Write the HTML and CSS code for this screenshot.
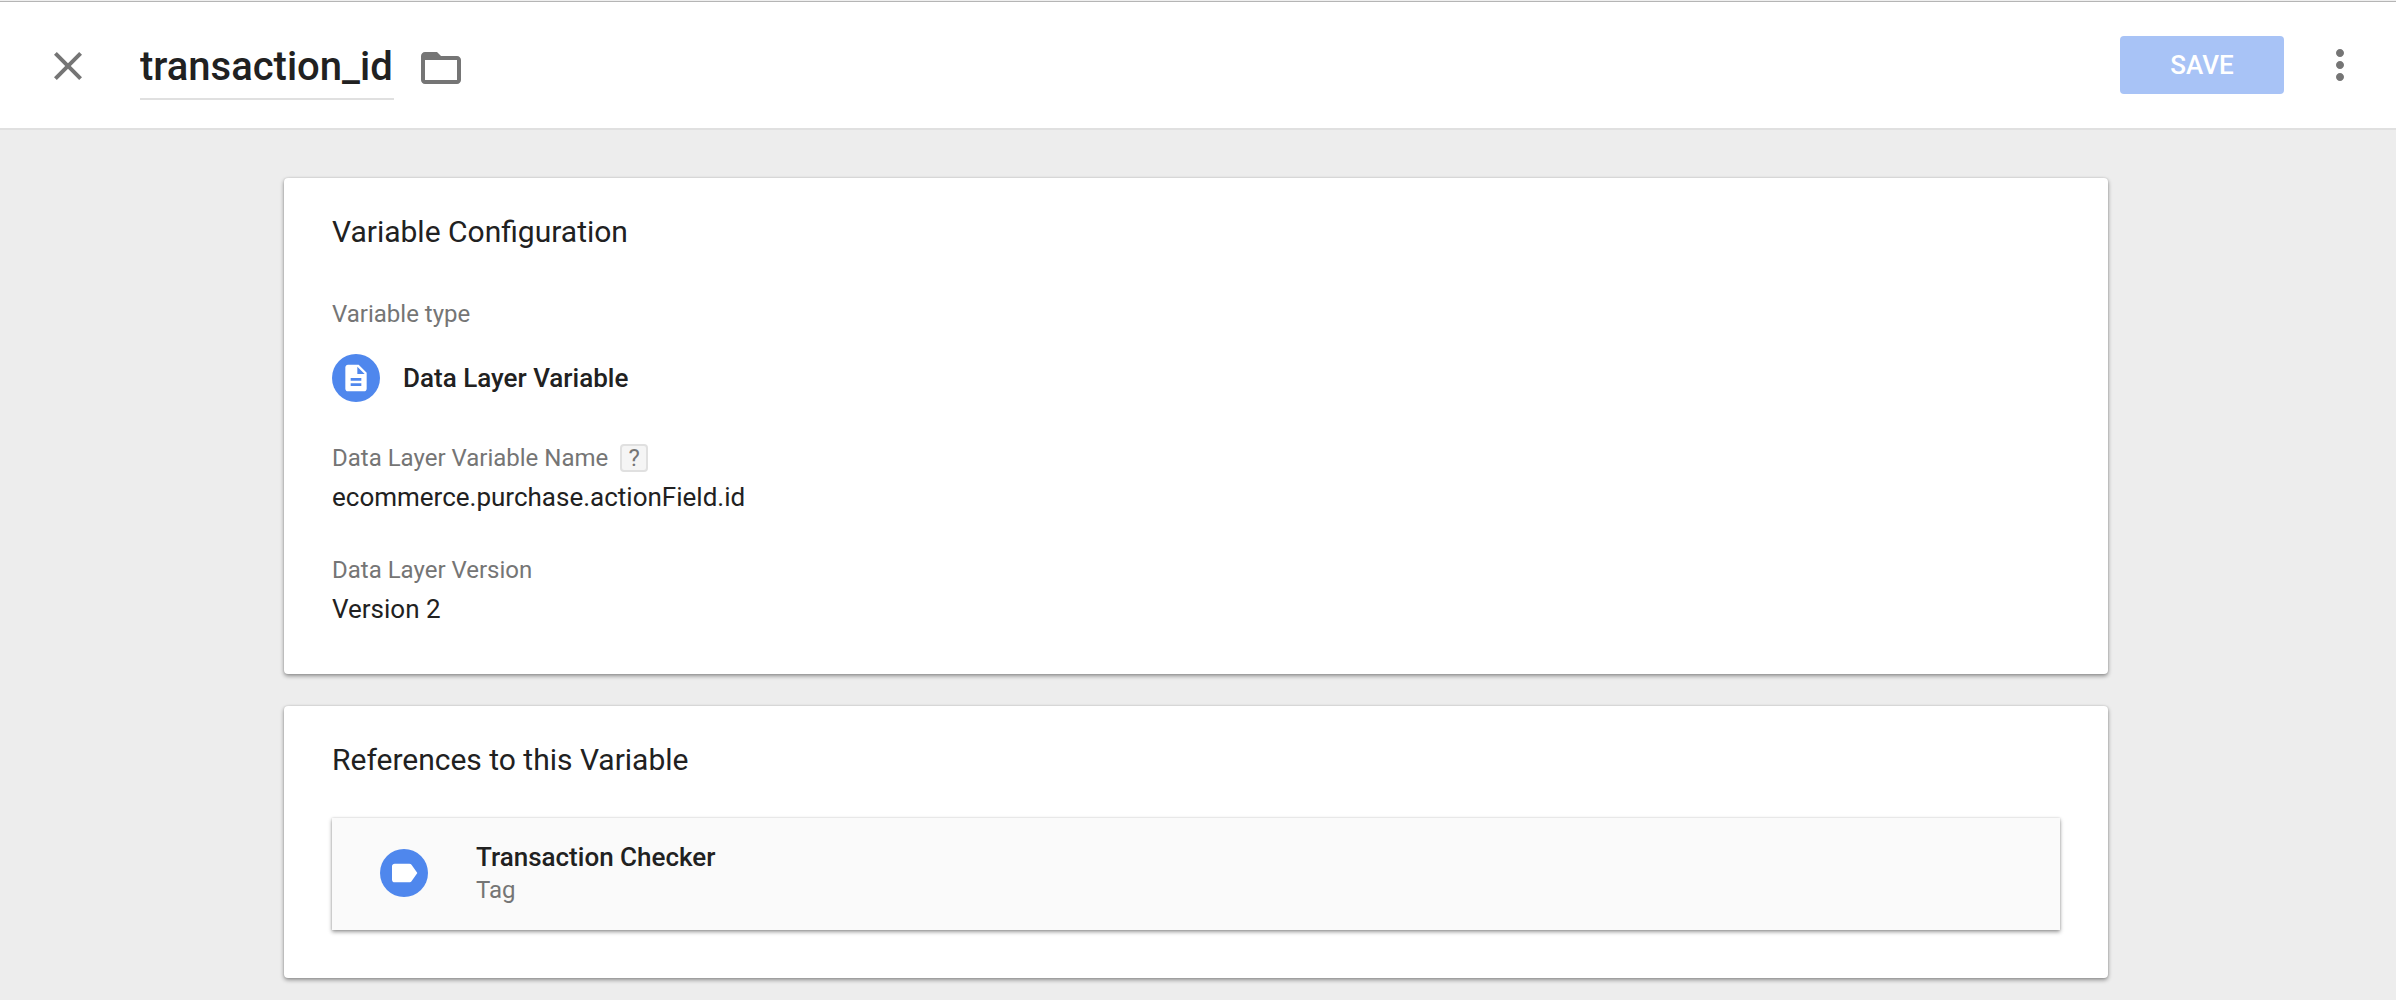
FILE: index.html
```html
<!DOCTYPE html>
<html lang="en">
  <head>
    <meta charset="utf-8" />
    <meta name="viewport" content="width=device-width, initial-scale=1" />
    <title>transaction_id</title>
    <link rel="stylesheet" href="styles.css">
  </head>
  <body>
    <header class="header">
      <button class="icon-button close-button" type="button" aria-label="Close">
        <svg class="icon" viewBox="0 0 24 24" fill="currentColor">
          <path d="M19 6.41L17.59 5 12 10.59 6.41 5 5 6.41 10.59 12 5 17.59 6.41 19 12 13.41 17.59 19 19 17.59 13.41 12z"></path>
        </svg>
      </button>
      <input class="title-input" type="text" value="transaction_id" aria-label="Variable name" spellcheck="false">
      <button class="icon-button" type="button" aria-label="Move to folder">
        <svg class="icon" viewBox="0 0 24 24" fill="currentColor">
          <path d="M20 6h-8l-2-2H4c-1.100 0-1.990.9-1.990 2L2 18c0 1.100.9 2 2 2h16c1.100 0 2-.9 2-2V8c0-1.100-.9-2-2-2zm0 12H4V8h16v10z"></path>
        </svg>
      </button>
      <div class="header-actions">
        <button class="save-button" type="button" disabled>SAVE</button>
        <button class="icon-button" type="button" aria-label="More actions">
          <svg class="icon" viewBox="0 0 24 24" fill="currentColor">
            <path d="M12 8c1.100 0 2-.9 2-2s-.9-2-2-2-2 .9-2 2 .9 2 2 2zm0 2c-1.100 0-2 .9-2 2s.9 2 2 2 2-.9 2-2-.9-2-2-2zm0 6c-1.100 0-2 .9-2 2s.9 2 2 2 2-.9 2-2-.9-2-2-2z"></path>
          </svg>
        </button>
      </div>
    </header>

    <main class="content">
      <!-- Variable configuration -->
      <section class="card">
        <h2 class="card-title">Variable Configuration</h2>
        <dl class="fields">
          <div class="field">
            <dt class="field-label">Variable type</dt>
            <dd class="variable-type">
              <span class="type-icon">
                <svg viewBox="0 0 24 24" fill="currentColor">
                  <path d="M14 2H6c-1.100 0-1.990.9-1.990 2L4 20c0 1.100.89 2 1.990 2H18c1.100 0 2-.9 2-2V8l-6-6zm2 16H8v-2h8v2zm0-4H8v-2h8v2zm-3-5V3.500L18.500 9H13z"></path>
                </svg>
              </span>
              <span class="item-name">Data Layer Variable</span>
            </dd>
          </div>
          <div class="field">
            <dt class="field-label">
              Data Layer Variable Name
              <button class="help-button" type="button" aria-label="Help">?</button>
            </dt>
            <dd class="field-value">ecommerce.purchase.actionField.id</dd>
          </div>
          <div class="field">
            <dt class="field-label">Data Layer Version</dt>
            <dd class="field-value">Version 2</dd>
          </div>
        </dl>
      </section>

      <!-- Where the variable is used -->
      <section class="card">
        <h2 class="card-title">References to this Variable</h2>
        <a class="reference" href="#">
          <span class="type-icon">
            <svg viewBox="0 0 24 24" fill="currentColor">
              <path d="M17.630 5.840C17.270 5.330 16.670 5 16 5L5 5.010C3.900 5.010 3 5.900 3 7v10c0 1.100.9 1.990 2 1.990L16 19c.67 0 1.270-.33 1.630-.84L22 12l-4.370-6.160z"></path>
            </svg>
          </span>
          <span class="reference-text">
            <span class="item-name">Transaction Checker</span>
            <span class="item-kind">Tag</span>
          </span>
        </a>
      </section>
    </main>
  </body>
</html>
```
FILE: styles.css
```css
:root {
  --color-text: #212121;
  --color-muted: #757575;
  --color-blue: #4f87ed;
  --color-line: #e0e0e0;
  --shadow: 0 2px 4px rgba(0, 0, 0, 0.4), 0 0 2px rgba(0, 0, 0, 0.15);
}

* {
  box-sizing: border-box;
}

body {
  margin: 0;
  border-top: 1px solid #efefef;
  font-family: Roboto, Arial, sans-serif;
  font-size: 26px;
  line-height: 34px;
  color: var(--color-text);
  background: #ededed;
}

button,
input {
  margin: 0;
  padding: 0;
  border: 0;
  font-family: inherit;
}

/* Header */
.header {
  display: flex;
  align-items: center;
  padding: 34px 32px 28px 44px;
  border-top: 1px solid #b5b5b5;
  border-bottom: 2px solid var(--color-line);
  background: #fff;
}

.icon-button {
  display: flex;
  align-items: center;
  color: var(--color-muted);
  background: none;
}

.icon {
  width: 48px;
  height: 48px;
}

.close-button {
  align-self: flex-start;
  height: 60px;
  margin-right: 48px;
}

.title-input {
  width: 254px;
  height: 64px;
  margin-right: 23px;
  padding: 6px 0 8px;
  border-bottom: 2px solid var(--color-line);
  font-size: 40px;
  font-weight: 500;
  line-height: 48px;
  color: var(--color-text);
  background: none;
}

.header-actions {
  display: flex;
  align-self: flex-start;
  align-items: center;
  gap: 32px;
  height: 58px;
  margin-left: auto;
}

.save-button {
  width: 164px;
  height: 58px;
  border-radius: 4px;
  font-size: 26px;
  font-weight: 500;
  color: #fff;
  background: #a8c3f6;
}

/* Cards */
.content {
  display: flex;
  flex-direction: column;
  gap: 32px;
  padding: 48px 4px 22px 0;
}

.card {
  width: 100%;
  max-width: 1824px;
  margin: 0 auto;
  padding: 36px 48px 48px;
  border-radius: 4px;
  background: #fff;
  box-shadow: var(--shadow);
}

.card-title {
  margin: 0;
  font-size: 30px;
  font-weight: 400;
  line-height: 36px;
}

.type-icon {
  display: flex;
  flex: none;
  align-items: center;
  justify-content: center;
  width: 48px;
  height: 48px;
  border-radius: 50%;
  color: #fff;
  background: var(--color-blue);
}

.type-icon svg {
  width: 32px;
  height: 32px;
}

.item-name {
  font-weight: 500;
}

/* Configuration fields */
.fields {
  display: flex;
  flex-direction: column;
  gap: 42px;
  margin: 50px 0 0;
}

.field-label {
  display: flex;
  align-items: center;
  gap: 12px;
  font-size: 24px;
  line-height: 28px;
  color: var(--color-muted);
}

.field-value {
  margin: 8px 0 0;
}

.variable-type {
  display: flex;
  align-items: center;
  gap: 23px;
  margin: 26px 0 0;
}

.help-button {
  width: 28px;
  height: 28px;
  border: 2px solid var(--color-line);
  border-radius: 4px;
  font-size: 24px;
  line-height: 24px;
  color: var(--color-muted);
  background: #f5f5f5;
}

/* References */
.reference {
  display: flex;
  align-items: center;
  gap: 48px;
  margin-top: 40px;
  padding: 22px 48px 24px;
  color: inherit;
  text-decoration: none;
  background: #fafafa;
  box-shadow: var(--shadow);
}

.reference-text {
  display: flex;
  flex-direction: column;
}

.item-kind {
  font-size: 24px;
  line-height: 32px;
  color: var(--color-muted);
}
```
